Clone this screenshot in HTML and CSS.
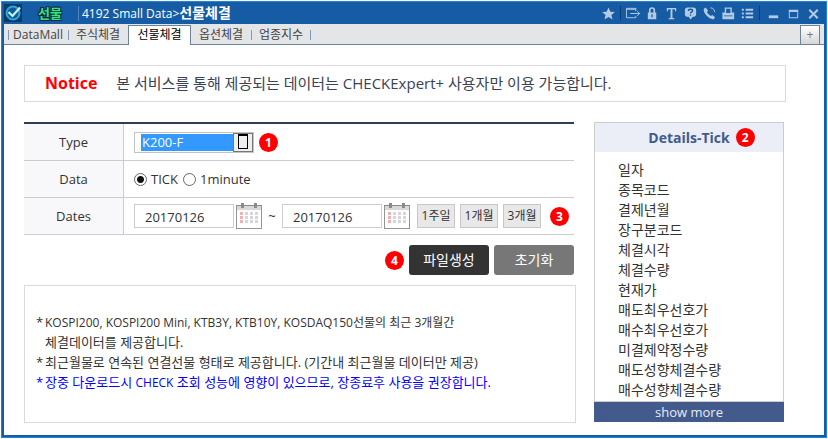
FILE: index.html
```html
<!DOCTYPE html>
<html lang="ko">
<head>
	<title>4192 Small Data</title>
	<meta charset="utf-8">
	<meta name="viewport" content="width=device-width, initial-scale=1">
	<link rel="stylesheet" href="styles.css">
</head>

<body>
<div class="window">
	<header class="titlebar">
		<svg class="logo" viewBox="0 0 18 18" width="18" height="18">
			<rect width="18" height="18" fill="#0a3a66"/>
			<circle cx="9" cy="9" r="6.5" fill="#0d5c94" stroke="#2fa6dd" stroke-width="2"/>
			<path d="M4.5 8l4 4L16 3.500" fill="none" stroke="#c8f4ff" stroke-width="2.200"/>
		</svg>
		<span class="market">선물</span>
		<h1 class="title">4192 Small Data&gt;<b>선물체결</b></h1>

		<div class="tools">
			<button aria-label="favorite"><svg viewBox="0 0 16 16"><path d="M8 1.500l2 4.600 4.800.4-3.700 3.200 1.200 4.800L8 11.800l-4.300 2.700 1.200-4.800L1.200 6.500 6 6.100z"/></svg></button>
			<i class="sep"></i>
			<button aria-label="export"><svg viewBox="0 0 16 16"><path class="line" d="M10.500 5.500v-3h-10v10h10v-2M.5 3.500h10M4.500 8h10M12 5.500L14.500 8 12 10.500"/></svg></button>
			<button aria-label="lock"><svg viewBox="0 0 16 16"><path d="M4.200 7V4.500a3.300 3.300 0 0 1 6.600 0V7H12v7H3V7zM6 7h3V4.500a1.500 1.500 0 0 0-3 0zM6.800 9v3h1.400V9z" fill-rule="evenodd"/></svg></button>
			<button aria-label="text"><svg viewBox="0 0 16 16"><path d="M3 2h10v3.500h-1L11.300 3.500H9V12.500l2 .5v1H5v-1l2-.5V3.500H4.700L4 5.500H3z"/></svg></button>
			<button aria-label="help"><svg viewBox="0 0 16 16"><path d="M5 1.500h6q3 0 3 3v4q0 3-3 3h-.5L8 14.500 6 11.500H5q-3 0-3-3v-4q0-3 3-3z"/><path d="M5.800 5.200q0-1.700 2.200-1.700t2.200 1.600q0 1-1.200 1.500-1 .4-1 1.400M8 9v1.400" fill="none" stroke="#155ca5" stroke-width="1.500"/></svg></button>
			<button aria-label="call"><svg viewBox="0 0 16 16"><path d="M2 3l2-1.500L6.500 5 5.200 6.500q1.500 3 4.200 4.200L11 9.500l3 2.500-1.500 2q-3.500 1-7.500-3.500T2 3z"/><path class="line" d="M9 2q4 0 4.500 4.500"/></svg></button>
			<button aria-label="print"><svg viewBox="0 0 16 16"><path d="M4 1.500h7.500V7H14v7H1.500V7H4zM5.500 3v4.500H10V3zM3 10v1h9.500v-1z" fill-rule="evenodd"/></svg></button>
			<button aria-label="list"><svg viewBox="0 0 16 16"><path d="M2 3h2v2H2zM6 3h8v2H6zM2 7h2v2H2zM6 7h8v2H6zM2 11h2v2H2zM6 11h8v2H6z"/></svg></button>
			<i class="sep"></i>
			<button class="win" aria-label="minimize"><svg viewBox="0 0 16 16"><path d="M3 10h10v3H3z"/></svg></button>
			<button class="win" aria-label="maximize"><svg viewBox="0 0 16 16"><path d="M3 4h10v9H3zM4 6.500V12h8V6.500z" fill-rule="evenodd"/></svg></button>
			<button class="win" aria-label="close"><svg viewBox="0 0 16 16"><path d="M3.500 4l9 9M12.500 4l-9 9" fill="none" stroke="#b5cae2" stroke-width="2.200"/></svg></button>
		</div>
	</header>

	<nav class="tabs">
		<a href="#mall">DataMall</a>
		<a href="#stock">주식체결</a>
		<a href="#futures" class="active">선물체결</a>
		<a href="#option">옵션체결</a>
		<a href="#sector">업종지수</a>
		<button class="add" aria-label="add tab">+</button>
	</nav>

	<main>
		<p class="notice"><strong>Notice</strong> 본 서비스를 통해 제공되는 데이터는 CHECKExpert+ 사용자만 이용 가능합니다.</p>

		<div class="columns">
			<form class="query">
				<table>
					<tr>
						<th><label for="type">Type</label></th>
						<td>
							<div class="row">
								<span class="combo">
									<select id="type"><option>K200-F</option></select>
									<span class="arrow"></span>
								</span>
								<span class="badge">1</span>
							</div>
						</td>
					</tr>
					<tr>
						<th>Data</th>
						<td>
							<div class="row">
								<label><input type="radio" name="data" checked>TICK</label>
								<label><input type="radio" name="data">1minute</label>
							</div>
						</td>
					</tr>
					<tr>
						<th><label for="from">Dates</label></th>
						<td>
							<div class="row dates">
								<input id="from" type="text" value="20170126">
								<button type="button" class="cal" aria-label="start date"><svg viewBox="0 0 26 26" width="26" height="26"><use href="#calendar"/></svg></button>
								<span class="tilde">~</span>
								<input type="text" value="20170126" aria-label="end date">
								<button type="button" class="cal" aria-label="end date calendar"><svg viewBox="0 0 26 26" width="26" height="26"><use href="#calendar"/></svg></button>
								<div class="periods">
									<button type="button">1주일</button>
									<button type="button">1개월</button>
									<button type="button">3개월</button>
								</div>
								<span class="badge">3</span>
							</div>
						</td>
					</tr>
				</table>

				<div class="actions">
					<span class="badge">4</span>
					<button type="button" class="create">파일생성</button>
					<button type="reset">초기화</button>
				</div>

				<ul class="notes">
					<li><small>KOSPI200, KOSPI200 Mini, KTB3Y, KTB10Y, KOSDAQ150선물의 최근 3개월간</small><br>체결데이터를 제공합니다.</li>
					<li>최근월물로 연속된 연결선물 형태로 제공합니다. (기간내 최근월물 데이터만 제공)</li>
					<li class="warn">장중 다운로드시 <small>CHECK</small> 조회 성능에 영향이 있으므로, 장종료후 사용을 권장합니다.</li>
				</ul>
			</form>

			<aside class="details">
				<h2><span>Details-Tick</span><span class="badge">2</span></h2>
				<ul>
					<li>일자</li>
					<li>종목코드</li>
					<li>결제년월</li>
					<li>장구분코드</li>
					<li>체결시각</li>
					<li>체결수량</li>
					<li>현재가</li>
					<li>매도최우선호가</li>
					<li>매수최우선호가</li>
					<li>미결제약정수량</li>
					<li>매도성향체결수량</li>
					<li>매수성향체결수량</li>
				</ul>
				<button class="more">show more</button>
			</aside>
		</div>
	</main>
</div>

<svg class="defs">
	<symbol id="calendar" viewBox="0 0 26 26">
		<rect x=".5" y="2.500" width="25" height="23" fill="#fff" stroke="#949494"/>
		<path d="M1 3h24v4H1z" fill="#d8d8d8"/>
		<path d="M0 2h26v1H0zM5 0h3v5H5zM18 0h3v5h-3z" fill="#8a8a8a"/>
		<path d="M5.500 9v12" stroke="#f3b0b0" stroke-width="3" stroke-dasharray="3 1"/>
		<path d="M10.500 9v12M15.500 9v12M20.500 9v12" stroke="#d6d6d6" stroke-width="3" stroke-dasharray="3 1"/>
	</symbol>
</svg>
</body>
</html>
```
FILE: styles.css
```css
* {
	box-sizing: border-box;
	margin: 0;
	padding: 0;
}

body {
	padding: 1px;
	background: white;
	color: #333;
	font: 13px/20px "Open Sans", "Noto Sans CJK KR", sans-serif;
}

button, input, select {
	font: inherit;
	color: inherit;
}

button {
	border: none;
	cursor: pointer;
}

ul {
	list-style: none;
}

.defs {
	display: none;
}

.window {
	display: flex;
	flex-direction: column;
	min-height: calc(100vh - 2px);
	border: 1px solid #1c86e0;
	padding: 0 2px 2px;
	background: #155ca5;
}

/* title bar */
.titlebar {
	display: flex;
	align-items: center;
	height: 22px;
	color: white;
}

.market {
	margin-left: 16px;
	width: 40px;
	font-size: 13px;
	font-weight: bold;
	color: #3fe07a;
	text-shadow: 1px 1px 0 #06283f, -1px -1px 0 #06283f, 1px -1px 0 #06283f, -1px 1px 0 #06283f;
}

.title {
	border-left: 1px solid #4d86c0;
	padding-left: 3px;
	font-size: 12px;
	line-height: 14px;
	font-weight: normal;
}

.title b {
	font-size: 14px;
}

.tools {
	display: flex;
	align-items: center;
	margin-left: auto;
	margin-right: 1px;
}

.tools button {
	display: flex;
	justify-content: center;
	width: 19px;
	background: none;
}

.tools .win {
	width: 20px;
}

.tools svg {
	width: 15px;
	height: 15px;
	fill: #b5cae2;
}

.tools .line {
	fill: none;
	stroke: #b5cae2;
}

.sep {
	width: 1px;
	height: 14px;
	margin: 0 3px 0 2px;
	background: #0d3c70;
}

/* tabs */
.tabs {
	display: flex;
	align-items: flex-end;
	height: 21px;
	padding: 0 4px;
	background: #e4e5e7;
	box-shadow: inset 0 -1px #6c8298;
	font-size: 12px;
}

.tabs a {
	position: relative;
	width: 60px;
	height: 20px;
	line-height: 20px;
	text-align: center;
	color: #444;
	text-decoration: none;
}

/* dividers between the tabs */
.tabs a::before, .tabs a:nth-of-type(5)::after {
	content: "";
	position: absolute;
	left: 0;
	top: 5px;
	height: 10px;
	border-left: 1px solid #7f97c0;
}

.tabs a:nth-of-type(5)::after {
	left: auto;
	right: 0;
}

.tabs .active {
	width: 63px;
	border: 1px solid #6c8298;
	border-bottom: none;
	background: white;
	color: black;
	line-height: 18px;
}

.tabs .active::before, .tabs .active + a::before {
	display: none;
}

.add {
	width: 20px;
	height: 20px;
	margin-left: auto;
	border: 1px solid #6c8298;
	background: linear-gradient(#fff, #d6d6d6);
	color: #777;
	line-height: 16px;
}

/* content */
main {
	flex: 1;
	padding: 20px 38px 12px 20px;
	background: white;
}

.notice {
	border: 1px solid #d9dadd;
	padding: 0 20px;
	line-height: 35px;
	font-size: 15px;
	color: #3a4256;
}

.notice strong {
	margin-right: 15px;
	font-size: 16px;
	color: red;
}

.columns {
	display: flex;
	gap: 18px;
	margin-top: 20px;
	padding-right: 2px;
}

.query {
	flex: 1;
}

table {
	width: calc(100% - 2px);
	border-collapse: separate;
	border-spacing: 0;
	border-top: 2px solid #2f3d58;
}

th, td {
	height: 37px;
	border-bottom: 1px solid #ccc;
}

th {
	width: 100px;
	border-right: 1px solid #ccc;
	background: #f8f8fa;
	font-weight: normal;
}

td {
	padding-left: 10px;
}

.row {
	display: flex;
	align-items: center;
	gap: 5px;
}

.row label {
	display: flex;
	align-items: center;
	gap: 4px;
}

.row input[type="radio"] {
	appearance: none;
	width: 13px;
	height: 13px;
	border: 1px solid #666;
	border-radius: 50%;
	background: white;
}

.row input[type="radio"]:checked {
	background: radial-gradient(#111 0 3px, #fff 4px);
}

.badge {
	display: inline-flex;
	align-items: center;
	justify-content: center;
	width: 19px;
	height: 19px;
	border-radius: 50%;
	background: red;
	color: white;
	font-size: 12px;
	line-height: 19px;
	font-weight: bold;
}

.combo {
	display: flex;
	width: 120px;
	height: 21px;
	border: 1px solid #c4c4c4;
	padding-left: 6px;
}

.combo select {
	appearance: none;
	flex: 1;
	margin: 1px 0;
	border: none;
	padding-left: 1px;
	background: #3399ff;
	color: white;
	line-height: 17px;
}

.arrow {
	display: flex;
	justify-content: center;
	width: 20px;
	border: 1px solid #777;
	background: #eee;
}

.arrow::before {
	content: "";
	width: 8px;
	height: 12px;
	border: 1px solid black;
	border-top-width: 2px;
}

.row.dates {
	gap: 2px;
}

.dates input {
	width: 100px;
	height: 24px;
	border: 1px solid #ccc;
	padding: 2px 0 0 10px;
}

.cal {
	display: flex;
	width: 26px;
	background: none;
}

.tilde {
	width: 16px;
	text-align: center;
}

.periods {
	display: flex;
	gap: 5px;
	margin: 0 7px 0 5px;
}

.periods button {
	width: 38px;
	height: 24px;
	border: 1px solid #c8c8c8;
	background: #e8e8e8;
	font-size: 12px;
	white-space: nowrap;
}

.actions {
	display: flex;
	align-items: center;
	justify-content: flex-end;
	gap: 5px;
	margin: 10px 2px 10px 0;
}

.actions button {
	width: 80px;
	height: 30px;
	border-radius: 3px;
	background: #777;
	color: white;
	font-size: 14px;
}

.actions .create {
	background: #333;
}

.notes {
	border: 1px solid #d9dadd;
	padding: 26px 11px 30px 20px;
}

.notes small {
	font-size: 12px;
	line-height: 12px;
}

.notes li::before {
	content: "*";
	display: inline-block;
	width: 9px;
	margin-left: -9px;
}

.notes .warn {
	color: blue;
}

/* details list */
.details {
	width: 190px;
}

.details h2 {
	display: grid;
	grid-template-columns: 1fr auto 1fr;
	align-items: center;
	column-gap: 6px;
	height: 30px;
	border: 1px solid #ccc;
	border-bottom: none;
	background: #ebeef6;
	color: #425b8c;
	font-size: 14px;
}

.details h2 span:first-child {
	grid-column: 2;
}

.details ul {
	border: 1px solid #ccc;
	border-top: none;
	padding: 8px 0 1px 23px;
	font-size: 14px;
}

.more {
	width: 100%;
	height: 20px;
	background: #425b8c;
	color: #e8ecf4;
	line-height: 20px;
}
```
